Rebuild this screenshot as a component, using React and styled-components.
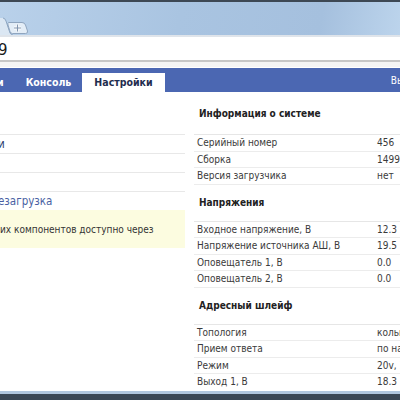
import React from 'react';
import styled, { createGlobalStyle } from 'styled-components';

const GlobalStyle = createGlobalStyle`
    html, body {
        margin: 0;
        padding: 0;
        overflow: hidden;
        background: #fff;
    }
    body {
        font-family: 'DejaVu Sans Condensed', 'Liberation Sans', sans-serif;
    }
`

const info = [
    ['Серийный номер', '456'],
    ['Сборка', '1499'],
    ['Версия загрузчика', 'нет'],
]

const voltages = [
    ['Входное напряжение, В', '12.3'],
    ['Напряжение источника АШ, В', '19.5'],
    ['Оповещатель 1, В', '0.0'],
    ['Оповещатель 2, В', '0.0'],
]

const loop = [
    ['Топология', 'кольцо'],
    ['Прием ответа', 'по напряжению'],
    ['Режим', '20v, 1ms'],
    ['Выход 1, В', '18.3'],
]

const sections = [
    { title: 'Информация о системе', rows: info },
    { title: 'Напряжения', rows: voltages },
    { title: 'Адресный шлейф', rows: loop },
]

const App = () => {
    return (
        <Window>
            <GlobalStyle />
            <TabStrip>
                <svg width="40" height="33" viewBox="0 0 40 33">
                    <path d="M0 16 L3 16 Q5 16 6 19 L10 31 Q11 33 13 33 L0 33 Z" fill="#dbe7f3" />
                    <path d="M3 16 Q5 16 6 19 L10 31 Q11 33 13 33" fill="none" stroke="#8ea6c2" strokeWidth="1" />
                    <path d="M8.5 20.5 L22 20.5 Q24.5 20.5 25.5 23 L27.5 29 Q28 31.5 25.5 31.5 L12.5 31.5 Q10.5 31.5 10 29.5 L8 23 Q7.5 20.5 8.5 20.5 Z" fill="#e3edf7" stroke="#8fa5bf" strokeWidth="1" />
                    <path d="M17.5 22.5 V29.5 M14 26 H21" stroke="#fff" strokeWidth="3" />
                    <path d="M17.5 22.5 V29.5 M14 26 H21" stroke="#8296b0" strokeWidth="1.2" />
                </svg>
            </TabStrip>
            <Toolbar>
                <Address>9</Address>
            </Toolbar>
            <Gap />
            <NavBar>
                <NavTab first>и</NavTab>
                <NavTab>Консоль</NavTab>
                <NavTab active>Настройки</NavTab>
                <NavRight>Вы</NavRight>
            </NavBar>
            <Content>
                <LeftCol>
                    <MenuItem>и</MenuItem>
                    <MenuItem />
                    <MenuItem />
                    <MenuItem link>езагрузка</MenuItem>
                    <Note>их компонентов доступно через</Note>
                </LeftCol>
                <RightCol>
                    {sections.map((s, i) => (
                        <Section key={s.title} first={i === 0}>
                            <SectionTitle first={i === 0}>{s.title}</SectionTitle>
                            {s.rows.map(([name, value]) => (
                                <Row key={name}>
                                    <Name>{name}</Name>
                                    <Value>{value}</Value>
                                </Row>
                            ))}
                        </Section>
                    ))}
                </RightCol>
            </Content>
            <BottomFrame />
        </Window>
    )
}

const Window = styled.div`
    width: 400px;
    height: 400px;
    display: flex;
    flex-direction: column;
    overflow: hidden;
    background: #fff;
`

const TabStrip = styled.div`
    height: 33px;
    flex-shrink: 0;
    border-top: 2px solid #3d4854;
    background: linear-gradient(100deg, #b9d1ea 0%, #a9c4e1 45%, #a5c0de 80%, #bcd4ec 100%);
    display: flex;
    align-items: flex-end;
    svg {
        display: block;
    }
`

const Toolbar = styled.div`
    height: 20px;
    padding-top: 3px;
    flex-shrink: 0;
    border-top: 2px solid #dfe4ea;
    border-bottom: 2px solid #c6c6c6;
    background: #fff;
    display: flex;
    align-items: center;
`

const Address = styled.span`
    font-family: 'DejaVu Sans', Verdana, sans-serif;
    font-size: 15px;
    color: #1a1a1a;
    margin-left: -2px;
`

const Gap = styled.div`
    height: 5px;
    flex-shrink: 0;
    background: #f4f4f4;
    border-bottom: 1px solid #fff;
`

const NavBar = styled.div`
    height: 24px;
    flex-shrink: 0;
    background: #4b67b2;
    display: flex;
    align-items: flex-end;
`

const NavTab = styled.div`
    height: 19px;
    line-height: 19px;
    padding: ${p => p.first ? '0 11px 0 0' : p.active ? '0 12px' : '0 11px'};
    margin-left: ${p => p.first ? '-3px' : '0'};
    font-size: 10.5px;
    font-weight: bold;
    white-space: nowrap;
    color: ${p => p.active ? '#1f2d4f' : '#fff'};
    background: ${p => p.active ? '#fff' : 'transparent'};
`

const NavRight = styled.div`
    margin-left: auto;
    align-self: center;
    font-size: 10px;
    color: #fff;
    margin-right: -4px;
`

const Content = styled.div`
    flex: 1;
    display: flex;
    overflow: hidden;
`

const LeftCol = styled.div`
    width: 185px;
    flex-shrink: 0;
    padding-top: 42px;
`

const MenuItem = styled.div`
    height: 18px;
    line-height: 18px;
    border-top: 1px solid #e8e8e8;
    font-size: 11.5px;
    white-space: nowrap;
    color: ${p => p.link ? '#4a5fa3' : '#2c3a6b'};
    margin-left: -2px;
`

const Note = styled.div`
    background: #fcfce0;
    height: 38px;
    line-height: 40px;
    font-size: 10px;
    white-space: nowrap;
    color: #333;
`

const RightCol = styled.div`
    flex: 1;
    margin-left: 9px;
    margin-right: -120px;
`

const Section = styled.div`
    padding-top: ${p => p.first ? '15px' : '11px'};
`

const SectionTitle = styled.div`
    font-size: 10px;
    font-weight: bold;
    color: #222;
    line-height: 14px;
    padding: 0 0 ${p => p.first ? '13px' : '11px'} 5px;
    border-bottom: 1px solid #e6e6e6;
`

const Row = styled.div`
    display: flex;
    height: 15.5px;
    line-height: 15.5px;
    border-bottom: 1px solid #ececec;
    font-size: 10px;
    color: #3a3a3a;
    padding-left: 3px;
`

const Name = styled.div`
    width: 180px;
    flex-shrink: 0;
    white-space: nowrap;
`

const Value = styled.div`
    white-space: nowrap;
`

const BottomFrame = styled.div`
    height: 6px;
    flex-shrink: 0;
    margin-top: 3px;
    border-top: 3px solid #b0c6de;
    background: #3a4755;
`

export default App
